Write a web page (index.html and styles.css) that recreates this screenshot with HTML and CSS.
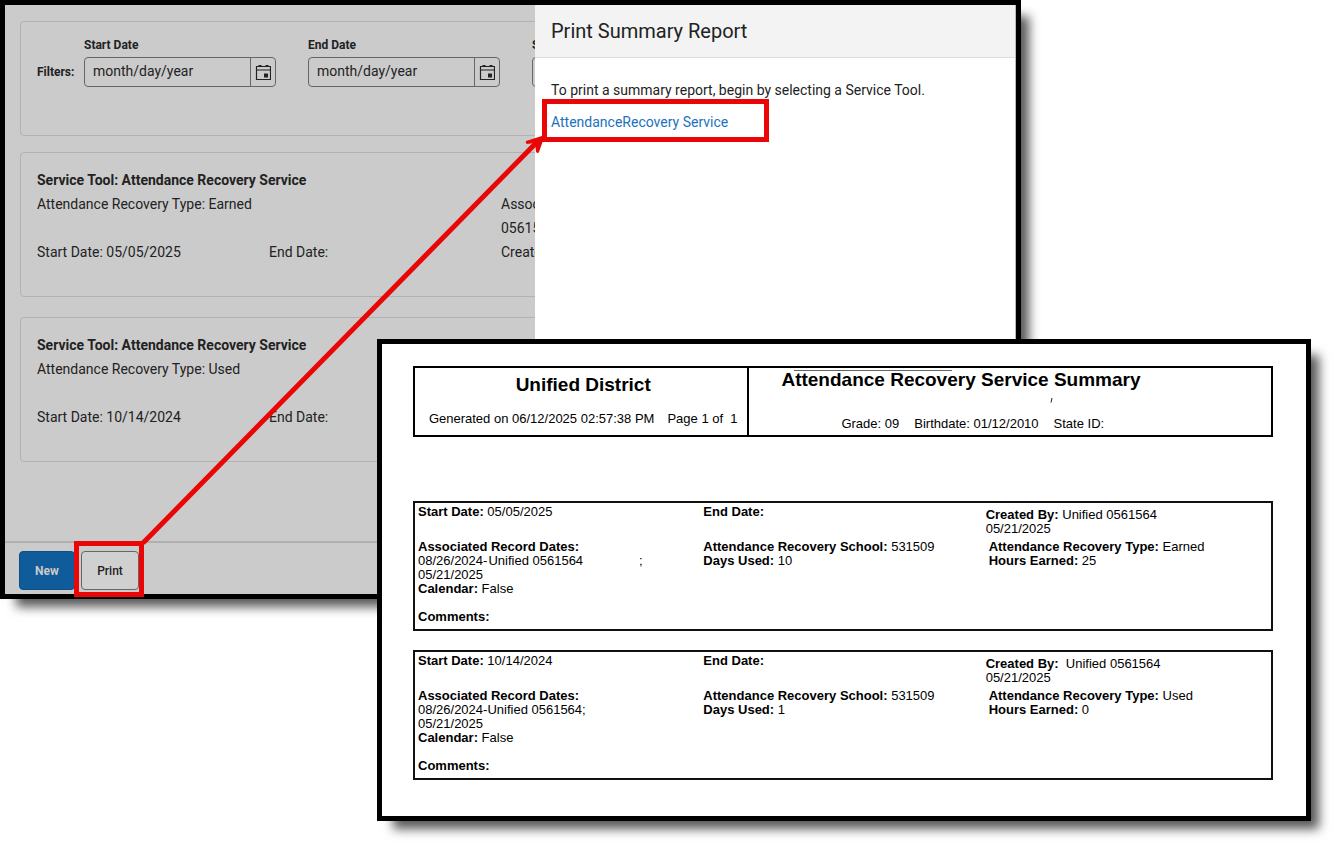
FILE: index.html
```html
<!DOCTYPE html>
<html lang="en">
<head>
<meta charset="utf-8">
<title>Print Summary Report</title>
<link rel="stylesheet" href="styles.css">
</head>
<body>
<div class="stage">
  <section class="app">
    <main class="list">
      <form class="card filters">
        <span class="filters-title">Filters:</span>
        <div class="field">
          <label for="start">Start Date</label>
          <div class="date">
            <input id="start" type="text" placeholder="month/day/year">
            <button type="button" aria-label="Choose start date"><svg width="16" height="17" viewBox="0 0 16 17"><path d="M1.500 2.500h14v13h-14z M1 6h15" fill="none" stroke="#222" stroke-width="1.2"/><path d="M4 1h2v2H4z M11 1h2v2h-2z M3 1.500h4v1H3z M10 1.500h4v1h-4z M9 9.500h4v4H9z" fill="#222"/></svg></button>
          </div>
        </div>
        <div class="field">
          <label for="end">End Date</label>
          <div class="date">
            <input id="end" type="text" placeholder="month/day/year">
            <button type="button" aria-label="Choose end date"><svg width="16" height="17" viewBox="0 0 16 17"><path d="M1.500 2.500h14v13h-14z M1 6h15" fill="none" stroke="#222" stroke-width="1.2"/><path d="M4 1h2v2H4z M11 1h2v2h-2z M3 1.500h4v1H3z M10 1.500h4v1h-4z M9 9.500h4v4H9z" fill="#222"/></svg></button>
          </div>
        </div>
        <div class="field">
          <label for="tool">S</label>
          <div class="date"><input id="tool" type="text"></div>
        </div>
      </form>
      <article class="card record">
        <h2>Service Tool: Attendance Recovery Service</h2>
        <p class="wide">Attendance Recovery Type: Earned</p><p>Associated<br>056156</p>
        <p>Start Date: 05/05/2025</p><p>End Date:</p><p>Created</p>
      </article>
      <article class="card record">
        <h2>Service Tool: Attendance Recovery Service</h2>
        <p class="wide">Attendance Recovery Type: Used</p><p><br><br></p>
        <p>Start Date: 10/14/2024</p><p>End Date:</p>
      </article>
    </main>
    <footer class="actions">
      <button class="btn primary" type="button">New</button>
      <div class="marked mark-print"><button class="btn" type="button">Print</button></div>
    </footer>
    <aside class="drawer">
      <h1>Print Summary Report</h1>
      <div class="drawer-body">
        <p>To print a summary report, begin by selecting a Service Tool.</p>
        <div class="marked mark-link"><a href="#report">AttendanceRecovery Service</a></div>
      </div>
    </aside>
    <svg class="arrow" width="560" height="560" viewBox="0 0 560 560" aria-hidden="true">
      <path d="M143 543L538 141" stroke="#ea0606" stroke-width="5" fill="none"/>
      <path d="M545 135L526 141Q525 143 527 144L535 143L536 152Q538 154 539 152Z" fill="#ea0606"/>
    </svg>
  </section>

  <section class="report" id="report">
    <header class="report-head">
      <div class="district">
        <h2>Unified District</h2>
        <p><span>Generated on 06/12/2025 02:57:38 PM</span><span>Page 1 of&nbsp; 1</span></p>
      </div>
      <div class="summary">
        <h2>Attendance Recovery Service Summary</h2>
        <div class="tick"><svg width="3" height="5" viewBox="0 0 3 5"><path d="M2 0L1 4.500" stroke="#123"/></svg></div>
        <p><span>Grade: 09</span><span>Birthdate: 01/12/2010</span><span>State ID:</span></p>
      </div>
    </header>
    <article class="entry">
      <p><b>Start Date:</b> 05/05/2025</p>
      <p><b>End Date:</b></p>
      <p class="created"><b>Created By:</b> Unified 0561564<br>05/21/2025</p>
      <p><b>Associated Record Dates:</b><br>08/26/2024-<span class="name">Unified 0561564</span><span class="semi">;</span><br>05/21/2025<br><b>Calendar:</b> False</p>
      <p><b>Attendance Recovery School:</b> 531509<br><b>Days Used:</b> 10</p>
      <p class="type"><b>Attendance Recovery Type:</b> Earned<br><b>Hours Earned:</b> 25</p>
      <p class="comments"><b>Comments:</b></p>
    </article>
    <article class="entry">
      <p><b>Start Date:</b> 10/14/2024</p>
      <p><b>End Date:</b></p>
      <p class="created"><b>Created By:</b>&nbsp; Unified 0561564<br>05/21/2025</p>
      <p><b>Associated Record Dates:</b><br>08/26/2024-Unified 0561564;<br>05/21/2025<br><b>Calendar:</b> False</p>
      <p><b>Attendance Recovery School:</b> 531509<br><b>Days Used:</b> 1</p>
      <p class="type"><b>Attendance Recovery Type:</b> Used<br><b>Hours Earned:</b> 0</p>
      <p class="comments"><b>Comments:</b></p>
    </article>
  </section>
</div>
</body>
</html>
```
FILE: styles.css
```css
* { box-sizing: border-box; }
body { margin: 0; background: #fff; color: #222; font: 14px/24px Roboto, sans-serif; }
h1, h2, p { margin: 0; }
button, input { font: inherit; color: inherit; }

.stage { position: relative; min-height: 846px; }

.app, .report { border: 5px solid #000; box-shadow: 12px 12px 10px -4px rgba(0, 0, 0, .65); }

/* Application window */
.app { position: relative; margin-right: 315px; background: #cbcbcb; }
.list { display: flex; flex-direction: column; gap: 20px; padding: 16px 15px 79px; overflow: hidden; }
.card { border: 1px solid #b2b2b2; border-radius: 4px; }

.filters { display: flex; align-items: flex-end; padding: 15px 16px 48px; margin-bottom: -4px; overflow: hidden; }
.filters-title { flex: none; width: 47px; font-size: 12px; font-weight: 700; line-height: 30px; }
.field { flex: none; display: flex; flex-direction: column; gap: 4px; width: 192px; margin-right: 32px; }
.field label { font-size: 12px; font-weight: 700; line-height: 16px; }
.date { display: flex; height: 30px; border: 1px solid #666; border-radius: 4px; overflow: hidden; }
.date input { flex: 1; min-width: 0; padding: 0 8px 2px; border: 0; background: transparent; }
.date input::placeholder { color: #222; opacity: 1; }
.date button { display: grid; place-items: center; width: 25px; padding: 0; border: 0; border-left: 1px solid #666; background: transparent; }

.record { display: grid; grid-template-columns: repeat(4, 232px); padding: 15px 16px 32px; }
.record h2 { grid-column: 1 / -1; font-size: 14px; font-weight: 700; line-height: 24px; }
.record .wide { grid-column: span 2; }
.record .wide + p { grid-column: 3 / -1; }

.actions { display: flex; gap: 6px; padding: 8px 14px 4px; border-top: 2px solid #b0b0b0; }
.btn { min-width: 58px; height: 39px; padding: 0 15px; border: 1px solid #666; border-radius: 4px; background: #d0d0d0; font-size: 12px; font-weight: 500; }
.btn.primary { min-width: 56px; border-color: #0c5089; background: #105c9a; color: #cbcbcb; font-weight: 700; }

.marked { position: relative; }
.marked::after { content: ""; position: absolute; border: 5px solid #ea0606; pointer-events: none; }
.mark-print::after { inset: -10px -5px -7px -7px; }
.mark-link::after { inset: -11px -218px -8px -9px; }
.mark-link { width: 0; white-space: nowrap; }

.drawer { position: absolute; top: 0; right: 0; bottom: 0; width: 481px; background: #fff; border-right: 1px solid #bbb; }
.drawer h1 { padding: 0 16px; background: #f3f3f3; border-bottom: 1px solid #ddd; font-size: 20px; font-weight: 400; line-height: 52px; }
.drawer-body { display: grid; gap: 8px; padding: 20px 16px; }
.drawer a { color: #1a73bc; text-decoration: none; }
.arrow { position: absolute; top: -5px; left: -5px; pointer-events: none; }

/* Printed report */
.report { position: absolute; top: 339px; left: 377px; right: 25px; padding: 22px 33px 36px 31px; background: #fff; color: #000; font: 13px/14px "Liberation Sans", Arial, sans-serif; }
.report-head { display: grid; grid-template-columns: 336fr 524fr; margin-bottom: 64px; border: 2px solid #000; }
.report-head h2 { font-size: 19px; line-height: 24px; }
.report-head p { display: flex; }
.district { padding: 5px 0 9px 4px; border-right: 2px solid #000; text-align: center; }
.district p { justify-content: center; gap: 13px; margin-top: 15px; }
.summary { position: relative; padding-left: 32px; white-space: nowrap; }
.summary::before { content: ""; position: absolute; top: 2px; left: 45px; width: 158px; border-top: 1px solid #666; }
.summary .tick { display: grid; height: 17px; padding: 6px 0 0 269px; }
.summary p { gap: 15px; margin-top: 8px; padding-left: 60px; }

.entry { display: grid; grid-template-columns: 286fr 283fr 284fr; grid-template-rows: 35px auto; padding: 2px 2px 5px 3px; border: 2px solid #111; }
.entry + .entry { margin-top: 19px; }
.created { padding-top: 3px; }
.type { padding-left: 3px; }
.name { margin-left: 1px; }
.semi { margin-left: 56px; }
.comments { grid-column: 1 / -1; margin-top: 14px; }
```
